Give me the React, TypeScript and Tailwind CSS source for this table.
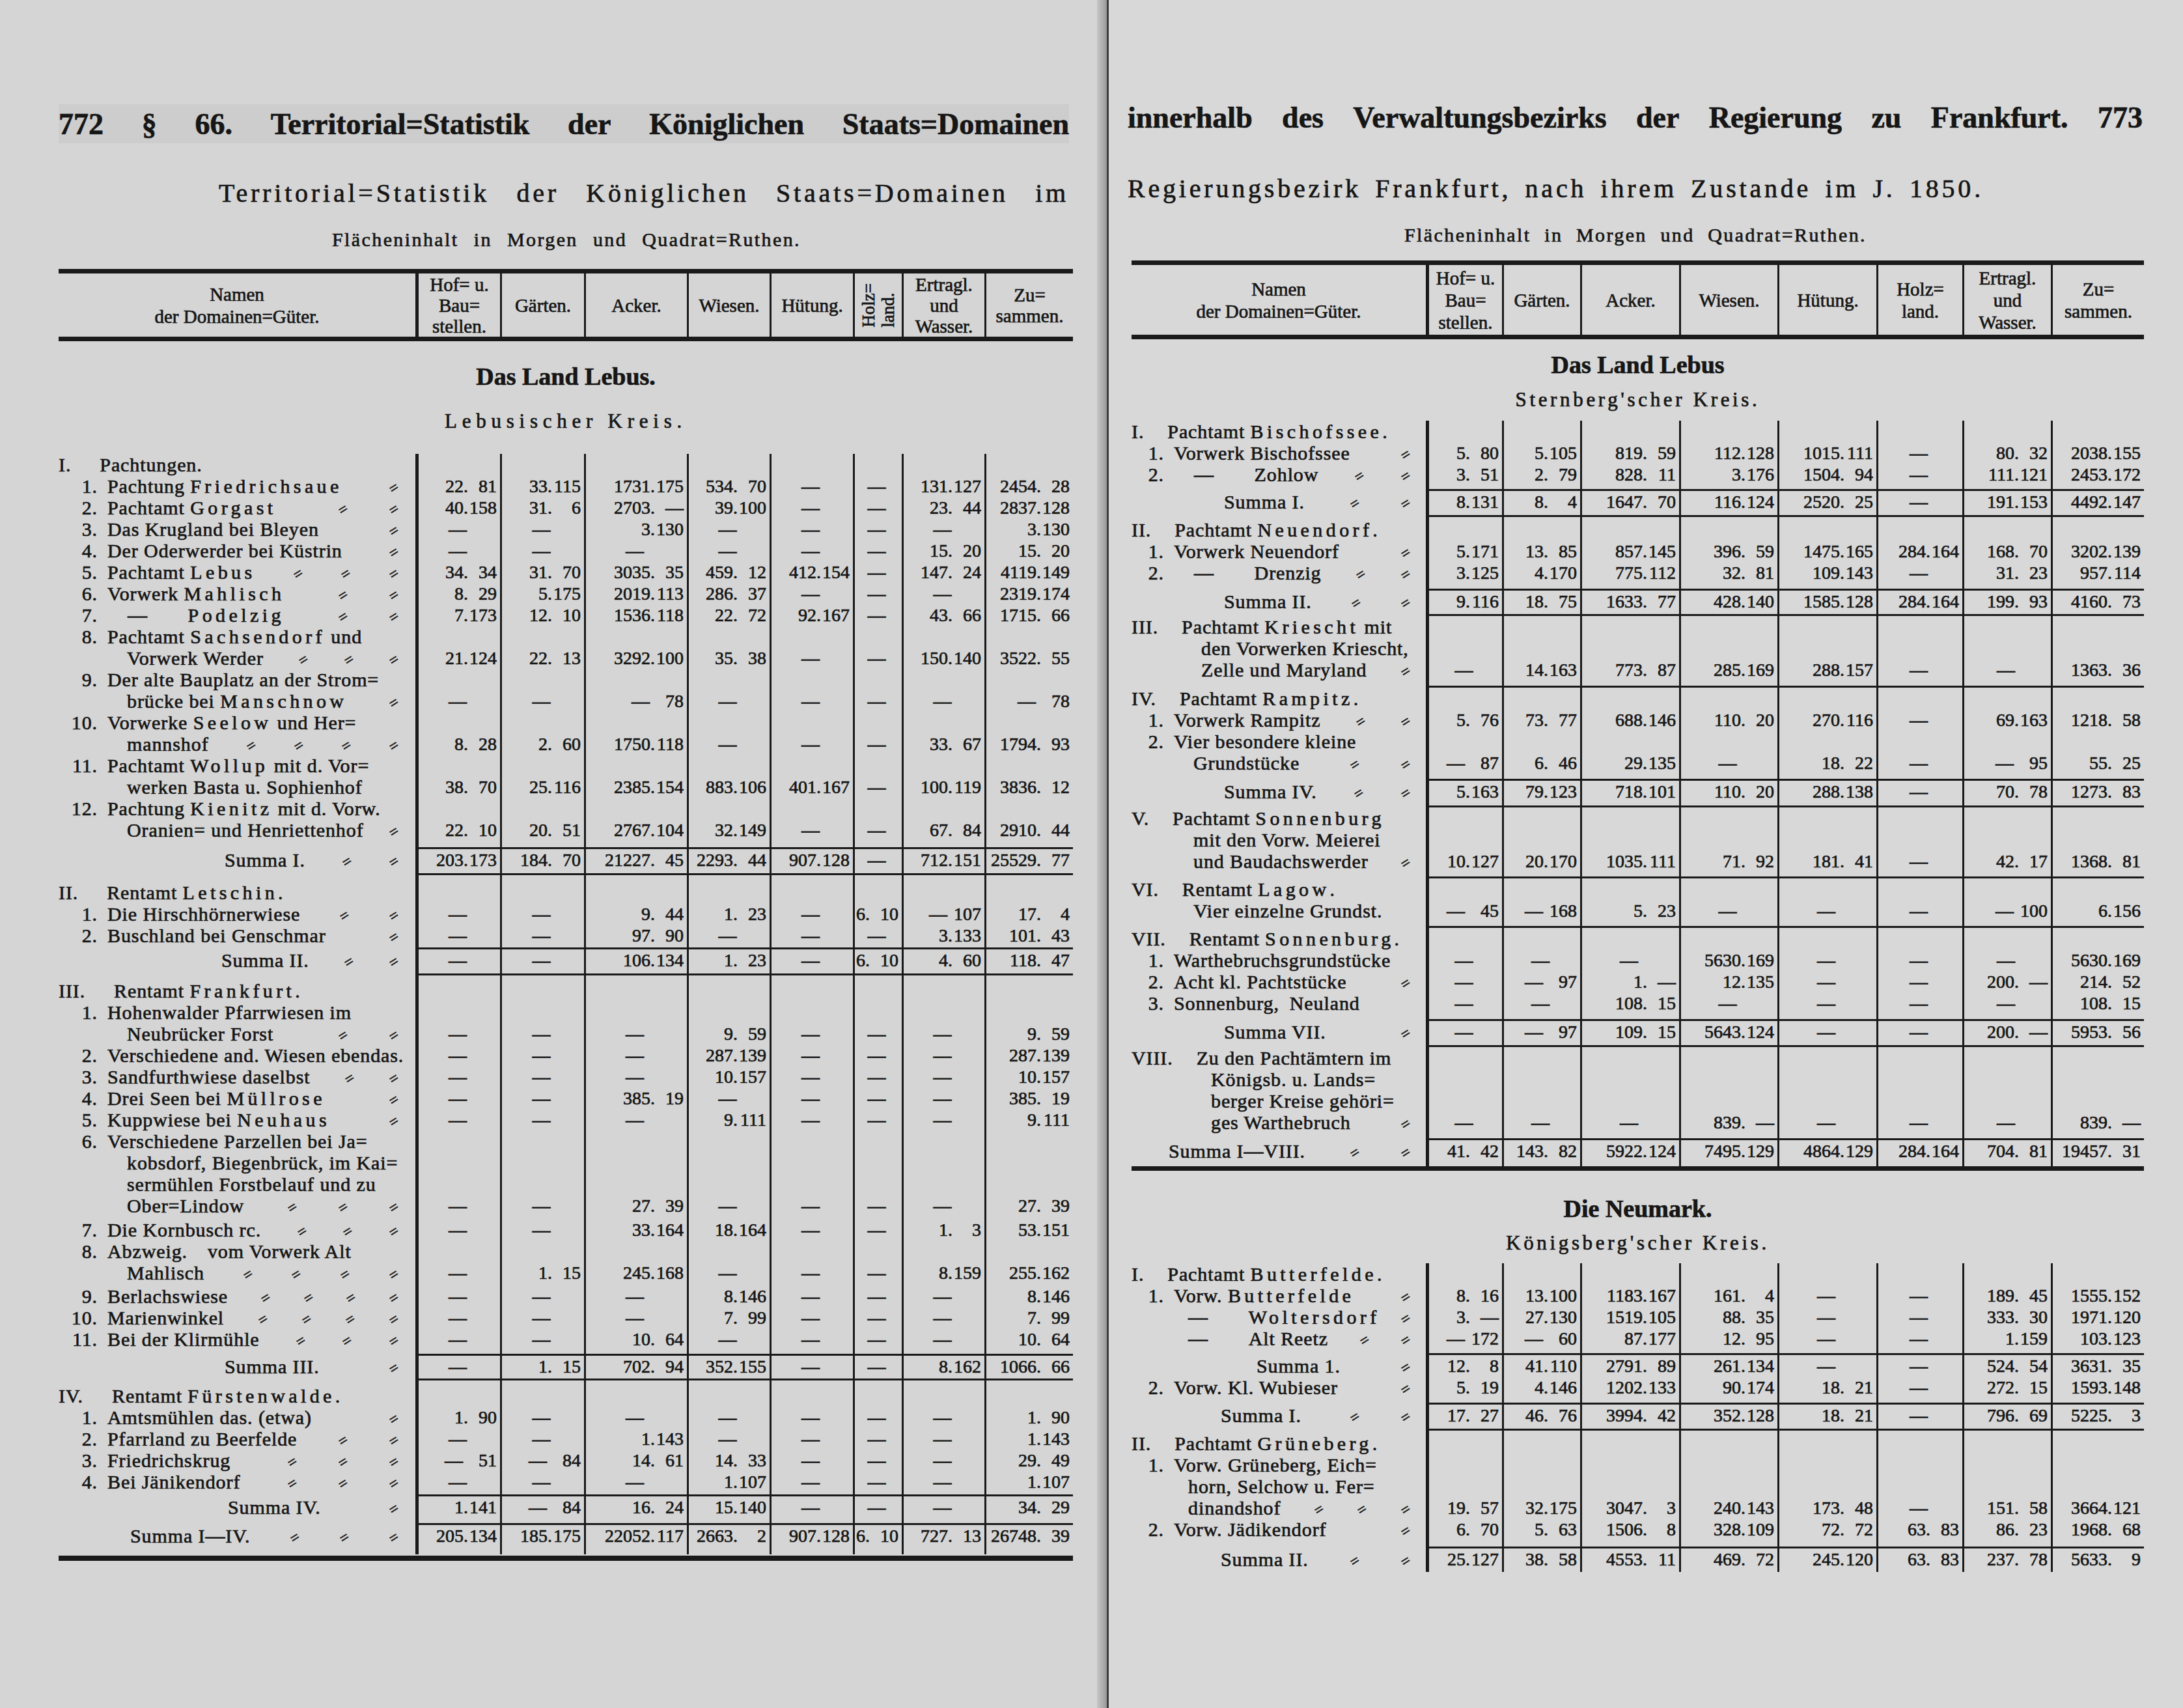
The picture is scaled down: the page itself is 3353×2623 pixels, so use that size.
import React from "react";

type L = { n?: string; r?: boolean; t: string; c?: string; ld?: number };
type R = { l: L[]; v?: string[]; rt?: boolean; rb?: boolean; p?: string };

const D = "—";
const LW = ["w-[548px]", "w-[130px]", "w-[129px]", "w-[158px]", "w-[127px]", "w-[128px]", "w-[75px]", "w-[127px]", "w-[136px]"];
const RW = ["w-[452px]", "w-[117px]", "w-[120px]", "w-[152px]", "w-[151px]", "w-[152px]", "w-[132px]", "w-[136px]", "w-[143px]"];
const LC = "pl-[105px]";
const RC = "pl-[95px]";

function sp(t: string) {
  const parts = t.split(/(\{[^}]*\})/);
  return parts.map((p, i) =>
    p.startsWith("{") ? (
      <span key={i} className="tracking-[0.18em]">{p.slice(1, -1)}</span>
    ) : (
      <React.Fragment key={i}>{p}</React.Fragment>
    )
  );
}

function Leader() {
  return (
    <span className="w-[78px] min-w-[16px] shrink text-right">
      <span className="inline-block -rotate-[32deg] text-[24px] leading-none">=</span>
    </span>
  );
}

function NameLine({ ln, side }: { ln: L; side: "L" | "R" }) {
  const lead = [];
  for (let i = 0; i < (ln.ld ?? 0); i++) lead.push(<Leader key={i} />);
  return (
    <div className={`h-[33px] leading-[33px] flex items-center whitespace-nowrap ${ln.c ?? ""}`}>
      {ln.n && ln.r && <span className={side === "L" ? "mr-[44px]" : "mr-[36px]"}>{ln.n}</span>}
      {ln.n && !ln.r && (
        <span className={`${side === "L" ? "w-[60px]" : "w-[50px]"} shrink-0 text-right mr-[15px]`}>{ln.n}</span>
      )}
      <span className="shrink-0">{sp(ln.t)}</span>
      <span className="flex-1" />
      {lead}
    </div>
  );
}

function Val({ v }: { v?: string }) {
  if (!v) return null;
  if (v === D) return <span className="w-full text-center leading-[33px]">{D}</span>;
  const [m, r] = v.split(".");
  return (
    <span className="flex leading-[33px] whitespace-nowrap">
      {m === D ? <span className="mr-[8px]">{D}</span> : <span>{m}.</span>}
      <span className="w-[44px] text-right">{r}</span>
    </span>
  );
}

function Row({ row, W, side }: { row: R; W: string[]; side: "L" | "R" }) {
  const b = `${row.rt ? "border-t-[3px]" : ""} ${row.rb ? "border-b-[3px]" : ""}`;
  return (
    <div className="flex">
      <div
        className={`${W[0]} shrink-0 flex flex-col border-transparent ${b} ${row.p ?? ""} ${
          side === "L" ? "pr-[26px]" : "pr-[24px]"
        } text-[30px] tracking-[0.03em]`}
      >
        {row.l.map((ln, i) => (
          <NameLine key={i} ln={ln} side={side} />
        ))}
      </div>
      {W.slice(1).map((w, i) => (
        <div
          key={i}
          className={`${w} shrink-0 ${i === 0 ? "border-l-[5px]" : "border-l-[3px]"} border-[#1a1a1a] ${b} ${
            row.p ?? ""
          } flex items-end justify-end pr-[5px] text-[28px]`}
        >
          <Val v={row.v?.[i]} />
        </div>
      ))}
    </div>
  );
}

function HeadCell({ w, first, lines, rot, lh }: { w: string; first?: boolean; lines: string[]; rot?: boolean; lh: string }) {
  return (
    <div
      className={`${w} shrink-0 ${first ? "border-l-[5px]" : "border-l-[3px]"} border-[#1a1a1a] flex flex-col items-center justify-center text-[29px] ${lh} whitespace-nowrap`}
    >
      {rot ? (
        <div className="[writing-mode:vertical-rl] rotate-180 leading-[30px] text-[27px]">
          <div>Holz=</div>
          <div>land.</div>
        </div>
      ) : (
        lines.map((t, i) => <div key={i}>{t}</div>)
      )}
    </div>
  );
}

function THead({ W, rot, h, lh }: { W: string[]; rot: boolean; h: string; lh: string }) {
  const labels = [
    ["Hof= u.", "Bau=", "stellen."],
    ["Gärten."],
    ["Acker."],
    ["Wiesen."],
    ["Hütung."],
    ["Holz=", "land."],
    ["Ertragl.", "und", "Wasser."],
    ["Zu=", "sammen."],
  ];
  return (
    <div className={`flex border-t-[7px] border-b-[7px] border-[#1a1a1a] ${h}`}>
      <div className={`${W[0]} shrink-0 flex flex-col items-center justify-center text-[29px] leading-[34px]`}>
        <div>Namen</div>
        <div>der Domainen=Güter.</div>
      </div>
      {W.slice(1).map((w, i) => (
        <HeadCell key={i} w={w} first={i === 0} lines={labels[i]} rot={rot && i === 5} lh={lh} />
      ))}
    </div>
  );
}

function Words({ text, cls }: { text: string; cls: string }) {
  return (
    <div className={`flex justify-between items-center whitespace-nowrap ${cls}`}>
      {text.split(" ").map((w, i) => (
        <span key={i}>{w}</span>
      ))}
    </div>
  );
}

const LROWS: R[] = [
  { l: [{ n: "I.", r: true, t: "Pachtungen." }] },
  { l: [{ n: "1.", t: "Pachtung {Friedrichsaue}", ld: 1 }], v: ["22.81", "33.115", "1731.175", "534.70", D, D, "131.127", "2454.28"] },
  { l: [{ n: "2.", t: "Pachtamt {Gorgast}", ld: 2 }], v: ["40.158", "31.6", "2703.—", "39.100", D, D, "23.44", "2837.128"] },
  { l: [{ n: "3.", t: "Das Krugland bei Bleyen", ld: 1 }], v: [D, D, "3.130", D, D, D, D, "3.130"] },
  { l: [{ n: "4.", t: "Der Oderwerder bei Küstrin", ld: 1 }], v: [D, D, D, D, D, D, "15.20", "15.20"] },
  { l: [{ n: "5.", t: "Pachtamt {Lebus}", ld: 3 }], v: ["34.34", "31.70", "3035.35", "459.12", "412.154", D, "147.24", "4119.149"] },
  { l: [{ n: "6.", t: "Vorwerk {Mahlisch}", ld: 2 }], v: ["8.29", "5.175", "2019.113", "286.37", D, D, D, "2319.174"] },
  { l: [{ n: "7.", t: "\u2003—\u2003\u2003{Podelzig}", ld: 2 }], v: ["7.173", "12.10", "1536.118", "22.72", "92.167", D, "43.66", "1715.66"] },
  {
    l: [{ n: "8.", t: "Pachtamt {Sachsendorf} und" }, { t: "Vorwerk Werder", c: LC, ld: 3 }],
    v: ["21.124", "22.13", "3292.100", "35.38", D, D, "150.140", "3522.55"],
  },
  {
    l: [{ n: "9.", t: "Der alte Bauplatz an der Strom=" }, { t: "brücke bei {Manschnow}", c: LC, ld: 1 }],
    v: [D, D, "—.78", D, D, D, D, "—.78"],
  },
  {
    l: [{ n: "10.", t: "Vorwerke {Seelow} und Her=" }, { t: "mannshof", c: LC, ld: 4 }],
    v: ["8.28", "2.60", "1750.118", D, D, D, "33.67", "1794.93"],
  },
  {
    l: [{ n: "11.", t: "Pachtamt {Wollup} mit d. Vor=" }, { t: "werken Basta u. Sophienhof", c: LC }],
    v: ["38.70", "25.116", "2385.154", "883.106", "401.167", D, "100.119", "3836.12"],
  },
  {
    l: [{ n: "12.", t: "Pachtung {Kienitz} mit d. Vorw." }, { t: "Oranien= und Henriettenhof", c: LC, ld: 1 }],
    v: ["22.10", "20.51", "2767.104", "32.149", D, D, "67.84", "2910.44"],
    p: "pb-[10px]",
  },
  {
    l: [{ t: "Summa I.", c: "pl-[255px]", ld: 2 }],
    v: ["203.173", "184.70", "21227.45", "2293.44", "907.128", D, "712.151", "25529.77"],
    rt: true,
    rb: true,
    p: "pb-[4px]",
  },
  { l: [{ n: "II.", r: true, t: "Rentamt {Letschin}." }], p: "pt-[10px]" },
  { l: [{ n: "1.", t: "Die Hirschhörnerwiese", ld: 2 }], v: [D, D, "9.44", "1.23", D, "6.10", "—.107", "17.4"] },
  { l: [{ n: "2.", t: "Buschland bei Genschmar", ld: 1 }], v: [D, D, "97.90", D, D, D, "3.133", "101.43"], p: "pb-[2px]" },
  {
    l: [{ t: "Summa II.", c: "pl-[250px]", ld: 2 }],
    v: [D, D, "106.134", "1.23", D, "6.10", "4.60", "118.47"],
    rt: true,
    rb: true,
    p: "pb-[4px]",
  },
  { l: [{ n: "III.", r: true, t: "Rentamt {Frankfurt}." }], p: "pt-[7px]" },
  {
    l: [{ n: "1.", t: "Hohenwalder Pfarrwiesen im" }, { t: "Neubrücker Forst", c: LC, ld: 2 }],
    v: [D, D, D, "9.59", D, D, D, "9.59"],
  },
  { l: [{ n: "2.", t: "Verschiedene and. Wiesen ebendas." }], v: [D, D, D, "287.139", D, D, D, "287.139"] },
  { l: [{ n: "3.", t: "Sandfurthwiese daselbst", ld: 2 }], v: [D, D, D, "10.157", D, D, D, "10.157"] },
  { l: [{ n: "4.", t: "Drei Seen bei {Müllrose}", ld: 1 }], v: [D, D, "385.19", D, D, D, D, "385.19"] },
  { l: [{ n: "5.", t: "Kuppwiese bei {Neuhaus}", ld: 1 }], v: [D, D, D, "9.111", D, D, D, "9.111"] },
  {
    l: [
      { n: "6.", t: "Verschiedene Parzellen bei Ja=" },
      { t: "kobsdorf, Biegenbrück, im Kai=", c: LC },
      { t: "sermühlen Forstbelauf und zu", c: LC },
      { t: "Ober=Lindow", c: LC, ld: 3 },
    ],
    v: [D, D, "27.39", D, D, D, D, "27.39"],
  },
  { l: [{ n: "7.", t: "Die Kornbusch rc.", ld: 3 }], v: [D, D, "33.164", "18.164", D, D, "1.3", "53.151"], p: "pt-[4px]" },
  {
    l: [{ n: "8.", t: "Abzweig.\u2003vom Vorwerk Alt" }, { t: "Mahlisch", c: LC, ld: 4 }],
    v: [D, "1.15", "245.168", D, D, D, "8.159", "255.162"],
  },
  { l: [{ n: "9.", t: "Berlachswiese", ld: 4 }], v: [D, D, D, "8.146", D, D, D, "8.146"], p: "pt-[3px]" },
  { l: [{ n: "10.", t: "Marienwinkel", ld: 4 }], v: [D, D, D, "7.99", D, D, D, "7.99"] },
  { l: [{ n: "11.", t: "Bei der Klirmühle", ld: 3 }], v: [D, D, "10.64", D, D, D, D, "10.64"], p: "pb-[6px]" },
  {
    l: [{ t: "Summa III.", c: "pl-[255px]", ld: 1 }],
    v: [D, "1.15", "702.94", "352.155", D, D, "8.162", "1066.66"],
    rt: true,
    rb: true,
    p: "pb-[2px]",
  },
  { l: [{ n: "IV.", r: true, t: "Rentamt {Fürstenwalde}." }], p: "pt-[7px]" },
  { l: [{ n: "1.", t: "Amtsmühlen das. (etwa)", ld: 1 }], v: ["1.90", D, D, D, D, D, D, "1.90"] },
  { l: [{ n: "2.", t: "Pfarrland zu Beerfelde", ld: 2 }], v: [D, D, "1.143", D, D, D, D, "1.143"] },
  { l: [{ n: "3.", t: "Friedrichskrug", ld: 3 }], v: ["—.51", "—.84", "14.61", "14.33", D, D, D, "29.49"] },
  { l: [{ n: "4.", t: "Bei Jänikendorf", ld: 3 }], v: [D, D, D, "1.107", D, D, D, "1.107"], p: "pb-[3px]" },
  {
    l: [{ t: "Summa IV.", c: "pl-[260px]", ld: 1 }],
    v: ["1.141", "—.84", "16.24", "15.140", D, D, D, "34.29"],
    rt: true,
    rb: true,
    p: "pb-[8px]",
  },
  {
    l: [{ t: "Summa I—IV.", c: "pl-[110px]", ld: 3 }],
    v: ["205.134", "185.175", "22052.117", "2663.2", "907.128", "6.10", "727.13", "26748.39"],
    p: "pb-[12px]",
  },
];

const RROWS1: R[] = [
  { l: [{ n: "I.", r: true, t: "Pachtamt {Bischofssee}." }] },
  { l: [{ n: "1.", t: "Vorwerk Bischofssee", ld: 1 }], v: ["5.80", "5.105", "819.59", "112.128", "1015.111", D, "80.32", "2038.155"] },
  {
    l: [{ n: "2.", t: "\u2003—\u2003\u2003Zohlow", ld: 2 }],
    v: ["3.51", "2.79", "828.11", "3.176", "1504.94", D, "111.121", "2453.172"],
    p: "pb-[6px]",
  },
  {
    l: [{ t: "Summa I.", c: "pl-[142px]", ld: 2 }],
    v: ["8.131", "8.4", "1647.70", "116.124", "2520.25", D, "191.153", "4492.147"],
    rt: true,
    rb: true,
    p: "pb-[4px]",
  },
  { l: [{ n: "II.", r: true, t: "Pachtamt {Neuendorf}." }], p: "pt-[3px]" },
  { l: [{ n: "1.", t: "Vorwerk Neuendorf", ld: 1 }], v: ["5.171", "13.85", "857.145", "396.59", "1475.165", "284.164", "168.70", "3202.139"] },
  {
    l: [{ n: "2.", t: "\u2003—\u2003\u2003Drenzig", ld: 2 }],
    v: ["3.125", "4.170", "775.112", "32.81", "109.143", D, "31.23", "957.114"],
    p: "pb-[8px]",
  },
  {
    l: [{ t: "Summa II.", c: "pl-[142px]", ld: 2 }],
    v: ["9.116", "18.75", "1633.77", "428.140", "1585.128", "284.164", "199.93", "4160.73"],
    rt: true,
    rb: true,
    p: "pb-[3px]",
  },
  {
    l: [
      { n: "III.", r: true, t: "Pachtamt {Kriescht} mit" },
      { t: "den Vorwerken Kriescht,", c: "pl-[107px]" },
      { t: "Zelle und Maryland", c: "pl-[107px]", ld: 1 },
    ],
    v: [D, "14.163", "773.87", "285.169", "288.157", D, D, "1363.36"],
    rb: true,
    p: "pb-[8px]",
  },
  { l: [{ n: "IV.", r: true, t: "Pachtamt {Rampitz}." }] },
  { l: [{ n: "1.", t: "Vorwerk Rampitz", ld: 2 }], v: ["5.76", "73.77", "688.146", "110.20", "270.116", D, "69.163", "1218.58"] },
  {
    l: [{ n: "2.", t: "Vier besondere kleine" }, { t: "Grundstücke", c: RC, ld: 2 }],
    v: ["—.87", "6.46", "29.135", D, "18.22", D, "—.95", "55.25"],
    p: "pb-[8px]",
  },
  {
    l: [{ t: "Summa IV.", c: "pl-[142px]", ld: 2 }],
    v: ["5.163", "79.123", "718.101", "110.20", "288.138", D, "70.78", "1273.83"],
    rt: true,
    rb: true,
    p: "pb-[5px]",
  },
  {
    l: [
      { n: "V.", r: true, t: "Pachtamt {Sonnenburg}" },
      { t: "mit den Vorw. Meierei", c: RC },
      { t: "und Baudachswerder", c: RC, ld: 1 },
    ],
    v: ["10.127", "20.170", "1035.111", "71.92", "181.41", D, "42.17", "1368.81"],
    rb: true,
    p: "pb-[7px]",
  },
  {
    l: [{ n: "VI.", r: true, t: "Rentamt {Lagow}." }, { t: "Vier einzelne Grundst.", c: RC }],
    v: ["—.45", "—.168", "5.23", D, D, D, "—.100", "6.156"],
    rb: true,
    p: "pb-[7px]",
  },
  { l: [{ n: "VII.", r: true, t: "Rentamt {Sonnenburg}." }] },
  { l: [{ n: "1.", t: "Warthebruchsgrundstücke" }], v: [D, D, D, "5630.169", D, D, D, "5630.169"] },
  { l: [{ n: "2.", t: "Acht kl. Pachtstücke", ld: 1 }], v: [D, "—.97", "1.—", "12.135", D, D, "200.—", "214.52"] },
  { l: [{ n: "3.", t: "Sonnenburg,\u2002Neuland" }], v: [D, D, "108.15", D, D, D, D, "108.15"], p: "pb-[8px]" },
  {
    l: [{ t: "Summa VII.", c: "pl-[142px]", ld: 1 }],
    v: [D, "—.97", "109.15", "5643.124", D, D, "200.—", "5953.56"],
    rt: true,
    rb: true,
    p: "pb-[4px]",
  },
  {
    l: [
      { n: "VIII.", r: true, t: "Zu den Pachtämtern im" },
      { t: "Königsb. u. Lands=", c: "pl-[122px]" },
      { t: "berger Kreise gehöri=", c: "pl-[122px]" },
      { t: "ges Warthebruch", c: "pl-[122px]", ld: 1 },
    ],
    v: [D, D, D, "839.—", D, D, D, "839.—"],
    rb: true,
    p: "pb-[8px]",
  },
  {
    l: [{ t: "Summa I—VIII.", c: "pl-[57px]", ld: 2 }],
    v: ["41.42", "143.82", "5922.124", "7495.129", "4864.129", "284.164", "704.81", "19457.31"],
    p: "pb-[7px]",
  },
];

const RROWS2: R[] = [
  { l: [{ n: "I.", r: true, t: "Pachtamt {Butterfelde}." }] },
  { l: [{ n: "1.", t: "Vorw. {Butterfelde}", ld: 1 }], v: ["8.16", "13.100", "1183.167", "161.4", D, D, "189.45", "1555.152"] },
  { l: [{ t: "—\u2003\u2003{Woltersdorf}", c: "pl-[87px]", ld: 1 }], v: ["3.—", "27.130", "1519.105", "88.35", D, D, "333.30", "1971.120"] },
  {
    l: [{ t: "—\u2003\u2003Alt Reetz", c: "pl-[87px]", ld: 2 }],
    v: ["—.172", "—.60", "87.177", "12.95", D, D, "1.159", "103.123"],
    p: "pb-[6px]",
  },
  { l: [{ t: "Summa 1.", c: "pl-[192px]", ld: 1 }], v: ["12.8", "41.110", "2791.89", "261.134", D, D, "524.54", "3631.35"], rt: true },
  {
    l: [{ n: "2.", t: "Vorw. Kl. Wubieser", ld: 1 }],
    v: ["5.19", "4.146", "1202.133", "90.174", "18.21", D, "272.15", "1593.148"],
    p: "pb-[7px]",
  },
  {
    l: [{ t: "Summa I.", c: "pl-[137px]", ld: 2 }],
    v: ["17.27", "46.76", "3994.42", "352.128", "18.21", D, "796.69", "5225.3"],
    rt: true,
    rb: true,
    p: "pb-[4px]",
  },
  { l: [{ n: "II.", r: true, t: "Pachtamt {Grüneberg}." }], p: "pt-[3px]" },
  {
    l: [
      { n: "1.", t: "Vorw. Grüneberg, Eich=" },
      { t: "horn, Selchow u. Fer=", c: "pl-[87px]" },
      { t: "dinandshof", c: "pl-[87px]", ld: 3 },
    ],
    v: ["19.57", "32.175", "3047.3", "240.143", "173.48", D, "151.58", "3664.121"],
  },
  {
    l: [{ n: "2.", t: "Vorw. Jädikendorf", ld: 1 }],
    v: ["6.70", "5.63", "1506.8", "328.109", "72.72", "63.83", "86.23", "1968.68"],
    p: "pb-[10px]",
  },
  {
    l: [{ t: "Summa II.", c: "pl-[137px]", ld: 2 }],
    v: ["25.127", "38.58", "4553.11", "469.72", "245.120", "63.83", "237.78", "5633.9"],
    rt: true,
    p: "pb-[3px]",
  },
];

export default function App() {
  return (
    <div className="font-['Liberation_Serif','Times_New_Roman',serif] w-[3353px] h-[2623px] flex overflow-hidden text-[#161616] bg-[#d6d6d6] [-webkit-text-stroke:0.7px_#161616]">
      {/* left page */}
      <div className="w-[1685px] shrink-0 h-full bg-[#d5d5d5] pt-[160px] pl-[90px]">
        <div className="w-[1558px]">
          <div className="bg-[#cdcdcd] w-[1552px]">
            <Words
              text="772 § 66. Territorial=Statistik der Königlichen Staats=Domainen"
              cls="h-[60px] text-[46px] font-bold"
            />
          </div>
          <Words
            text="Territorial=Statistik der Königlichen Staats=Domainen im"
            cls="mt-[52px] h-[50px] ml-[246px] w-[1306px] text-[40px] tracking-[0.12em]"
          />
          <Words
            text="Flächeninhalt in Morgen und Quadrat=Ruthen."
            cls="mt-[25px] h-[40px] ml-[420px] w-[720px] text-[30px] tracking-[0.08em]"
          />
          <div className="mt-[26px]">
            <THead W={LW} rot={true} h="h-[111px]" lh="leading-[32px]" />
          </div>
          <div className="mt-[32px] h-[44px] leading-[44px] text-center text-[38px] font-bold">Das Land Lebus.</div>
          <div className="mt-[27px] h-[40px] leading-[40px] text-center text-[31px] tracking-[0.25em]">Lebusischer Kreis.</div>
          <div className="mt-[30px]">
            {LROWS.map((r, i) => (
              <Row key={i} row={r} W={LW} side="L" />
            ))}
          </div>
          <div className="mt-[2px] h-[8px] bg-[#1a1a1a]" />
        </div>
      </div>

      {/* gutter */}
      <div className="w-[18px] shrink-0 h-full bg-[linear-gradient(90deg,#c6c6c6,#adadad_55%,#9a9a9a)] border-r-[3px] border-[#3c3c3c]" />

      {/* right page */}
      <div className="flex-1 h-full bg-[#d8d8d8] pt-[150px] pl-[35px]">
        <div className="w-[1555px]">
          <Words
            text="innerhalb des Verwaltungsbezirks der Regierung zu Frankfurt. 773"
            cls="-ml-[6px] w-[1559px] h-[60px] text-[46px] font-bold"
          />
          <Words
            text="Regierungsbezirk Frankfurt, nach ihrem Zustande im J. 1850."
            cls="-ml-[6px] mt-[55px] h-[50px] w-[1315px] text-[40px] tracking-[0.12em]"
          />
          <Words
            text="Flächeninhalt in Morgen und Quadrat=Ruthen."
            cls="mt-[25px] h-[40px] ml-[419px] w-[710px] text-[30px] tracking-[0.08em]"
          />
          <div className="mt-[20px]">
            <THead W={RW} rot={false} h="h-[121px]" lh="leading-[34px]" />
          </div>
          <div className="mt-[17px] h-[44px] leading-[44px] text-center text-[38px] font-bold">Das Land Lebus</div>
          <div className="mt-[12px] h-[40px] leading-[40px] text-center text-[31px] tracking-[0.15em]">Sternberg'scher Kreis.</div>
          <div className="mt-[12px]">
            {RROWS1.map((r, i) => (
              <Row key={i} row={r} W={RW} side="R" />
            ))}
          </div>
          <div className="h-[7px] bg-[#1a1a1a]" />
          <div className="mt-[36px] h-[44px] leading-[44px] text-center text-[38px] font-bold">Die Neumark.</div>
          <div className="mt-[11px] h-[40px] leading-[40px] text-center text-[31px] tracking-[0.15em]">Königsberg'scher Kreis.</div>
          <div className="mt-[11px]">
            {RROWS2.map((r, i) => (
              <Row key={i} row={r} W={RW} side="R" />
            ))}
          </div>
        </div>
      </div>
    </div>
  );
}
